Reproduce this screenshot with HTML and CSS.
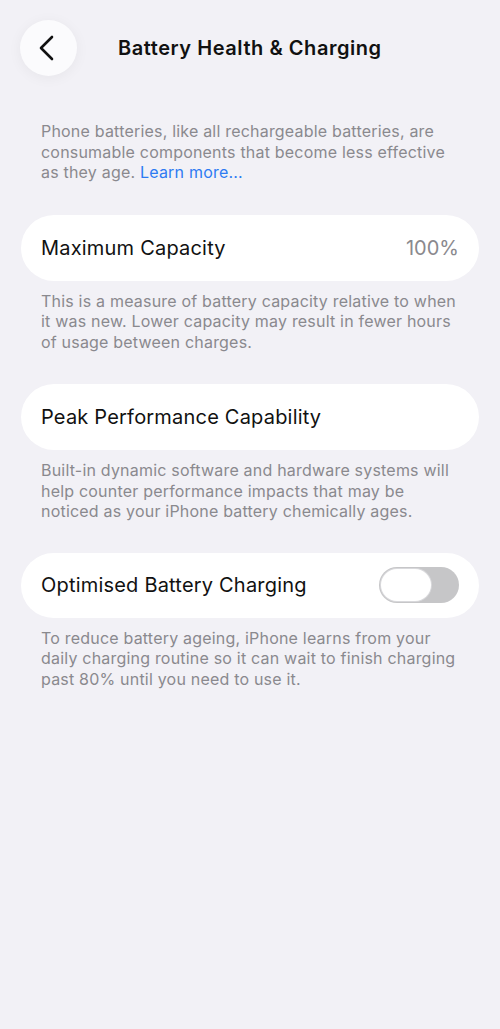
FILE: index.html
```html
<!DOCTYPE html>
<html lang="en">
<head>
    <meta charset="UTF-8">
    <meta name="viewport" content="width=device-width, initial-scale=1.0">
    <title>Battery Health &amp; Charging</title>
    <link rel="stylesheet" href="styles.css">
</head>
<body>
    <header class="top-bar">
        <button class="back-button" aria-label="Back">
            <svg width="24" height="28" viewBox="0 0 24 28">
                <path d="M17 3 L6 14 L17 25" fill="none" stroke="#111" stroke-width="2.6" stroke-linecap="round" stroke-linejoin="round"/>
            </svg>
        </button>
        <h1 class="title">Battery Health &amp; Charging</h1>
    </header>

    <main class="content">
        <p class="note intro">
            <span>Phone batteries, like all rechargeable batteries, are consumable components that become less effective as they age.</span>
            <a href="#" class="link">Learn more...</a>
        </p>

        <div class="card">
            <span class="card-label">Maximum Capacity</span>
            <span class="card-value">100%</span>
        </div>
        <p class="note">
            This is a measure of battery capacity relative to when it was new. Lower capacity may result in fewer hours of usage between charges.
        </p>

        <div class="card">
            <span class="card-label">Peak Performance Capability</span>
        </div>
        <p class="note">
            Built-in dynamic software and hardware systems will help counter performance impacts that may be noticed as your iPhone battery chemically ages.
        </p>

        <div class="card card-toggle">
            <span class="card-label">Optimised Battery Charging</span>
            <span class="toggle"><span class="toggle-knob"></span></span>
        </div>
        <p class="note">
            To reduce battery ageing, iPhone learns from your daily charging routine so it can wait to finish charging past 80% until you need to use it.
        </p>
    </main>
</body>
</html>
```

FILE: styles.css
```css
* {
    margin: 0;
    padding: 0;
    box-sizing: border-box;
}

body {
    font-family: Inter, 'Noto Sans', sans-serif;
    background: #f2f1f6;
    color: #111;
    min-height: 100vh;
}

.top-bar {
    display: flex;
    align-items: center;
    padding: 20px 20px 0 20px;
    height: 76px;
}

.back-button {
    width: 57px;
    height: 56px;
    border-radius: 50%;
    border: none;
    background: #fbfbfd;
    box-shadow: 0 2px 14px rgba(0, 0, 0, 0.05);
    display: flex;
    align-items: center;
    justify-content: center;
    padding-right: 4px;
}

.title {
    font-size: 20px;
    font-weight: 600;
    margin-left: 41px;
    letter-spacing: 0.55px;
}

.content {
    padding: 45px 21px 0 21px;
}

.note {
    font-size: 16px;
    line-height: 20.5px;
    color: #8a898e;
    padding: 0 20px;
    margin-bottom: 32px;
    letter-spacing: 0.2px;
}

.card + .note {
    margin-top: 10px;
}

.link {
    color: #2d7bf2;
    text-decoration: none;
}

.card {
    display: flex;
    align-items: center;
    justify-content: space-between;
    height: 66px;
    padding: 0 20px;
    background: #fff;
    border-radius: 33px;
}

.card-toggle {
    height: 65px;
    margin-top: -1px;
}

.card-label {
    font-size: 20px;
    letter-spacing: 0.2px;
}

.card-value {
    font-size: 20px;
    color: #8a898e;
}

.toggle {
    display: flex;
    align-items: center;
    width: 80px;
    height: 36px;
    padding: 2px;
    border-radius: 18px;
    background: #c6c6c8;
}

.toggle-knob {
    width: 50px;
    height: 32px;
    border-radius: 16px;
    background: #fff;
    box-shadow: 0 0 0 1px #d9d9dc;
}
```
